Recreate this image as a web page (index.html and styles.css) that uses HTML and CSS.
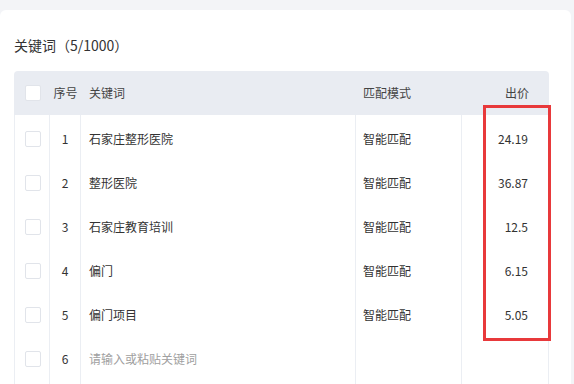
FILE: index.html
```
<!DOCTYPE html>
<html lang="zh-CN">
<head>
<meta charset="utf-8">
<link rel="stylesheet" href="styles.css">
</head>
<body>
<div class="card">
  <div class="title">关键词（5/1000）</div>
  <div class="table">
    <div class="row head">
      <div class="cell c-check"><span class="box"></span></div>
      <div class="cell c-no">序号</div>
      <div class="cell c-kw">关键词</div>
      <div class="cell c-mode">匹配模式</div>
      <div class="cell c-price">出价</div>
    </div>
    <div class="row">
      <div class="cell c-check"><span class="box"></span></div>
      <div class="cell c-no">1</div>
      <div class="cell c-kw">石家庄整形医院</div>
      <div class="cell c-mode">智能匹配</div>
      <div class="cell c-price">24.19</div>
    </div>
    <div class="row">
      <div class="cell c-check"><span class="box"></span></div>
      <div class="cell c-no">2</div>
      <div class="cell c-kw">整形医院</div>
      <div class="cell c-mode">智能匹配</div>
      <div class="cell c-price">36.87</div>
    </div>
    <div class="row">
      <div class="cell c-check"><span class="box"></span></div>
      <div class="cell c-no">3</div>
      <div class="cell c-kw">石家庄教育培训</div>
      <div class="cell c-mode">智能匹配</div>
      <div class="cell c-price">12.5</div>
    </div>
    <div class="row">
      <div class="cell c-check"><span class="box"></span></div>
      <div class="cell c-no">4</div>
      <div class="cell c-kw">偏门</div>
      <div class="cell c-mode">智能匹配</div>
      <div class="cell c-price">6.15</div>
    </div>
    <div class="row">
      <div class="cell c-check"><span class="box"></span></div>
      <div class="cell c-no">5</div>
      <div class="cell c-kw">偏门项目</div>
      <div class="cell c-mode">智能匹配</div>
      <div class="cell c-price">5.05</div>
    </div>
    <div class="row last">
      <div class="cell c-check"><span class="box"></span></div>
      <div class="cell c-no">6</div>
      <div class="cell c-kw placeholder">请输入或粘贴关键词</div>
      <div class="cell c-mode"></div>
      <div class="cell c-price"></div>
    </div>
  </div>
</div>
<div class="highlight"></div>
</body>
</html>
```

FILE: styles.css
```
html, body {
  margin: 0;
  padding: 0;
}
body {
  background: #f3f4f7;
  font-family: "Noto Sans CJK SC", "Noto Sans", sans-serif;
  color: #333;
  width: 574px;
  height: 384px;
  overflow: hidden;
}
.card {
  margin: 10px 3px 0 0;
  background: #fff;
  border-radius: 6px 6px 0 0;
  padding: 25px 0 0 14px;
  height: 349px;
}
.title {
  font-size: 14px;
  line-height: 20px;
  height: 20px;
  color: #333;
}
.table {
  margin-top: 16px;
  width: 535px;
}
.row {
  display: grid;
  grid-template-columns: 36px 31px 275px 106px 87px;
  height: 44px;
}
.row.last {
  height: 49px;
}
.cell {
  display: flex;
  align-items: center;
  font-size: 12px;
  line-height: 16px;
  box-sizing: border-box;
  border-right: 1px solid #ebeef3;
  color: #333;
  padding-top: 4px;
}
.row.last .cell {
  padding-bottom: 5px;
}
.row .c-check {
  border-left: 1px solid #ebeef3;
  justify-content: center;
  padding-left: 1px;
}
.head {
  background: #e9ecf2;
  border-radius: 4px 4px 0 0;
}
.head .cell {
  border: none;
  color: #444;
  padding-top: 0;
}
.head .c-check {
  padding-left: 2px;
}
.c-no {
  justify-content: center;
}
.c-kw {
  padding-left: 8px;
}
.c-mode {
  padding-left: 7px;
}
.c-price {
  justify-content: flex-end;
  padding-right: 20px;
}
.placeholder {
  color: #a0a0a0;
}
.box {
  width: 16px;
  height: 16px;
  box-sizing: border-box;
  border: 1px solid #e1e4ea;
  border-radius: 2px;
  background: #fff;
}
.highlight {
  position: absolute;
  left: 483px;
  top: 105px;
  width: 68px;
  height: 236px;
  box-sizing: border-box;
  border: 3px solid #e8393b;
}
```
